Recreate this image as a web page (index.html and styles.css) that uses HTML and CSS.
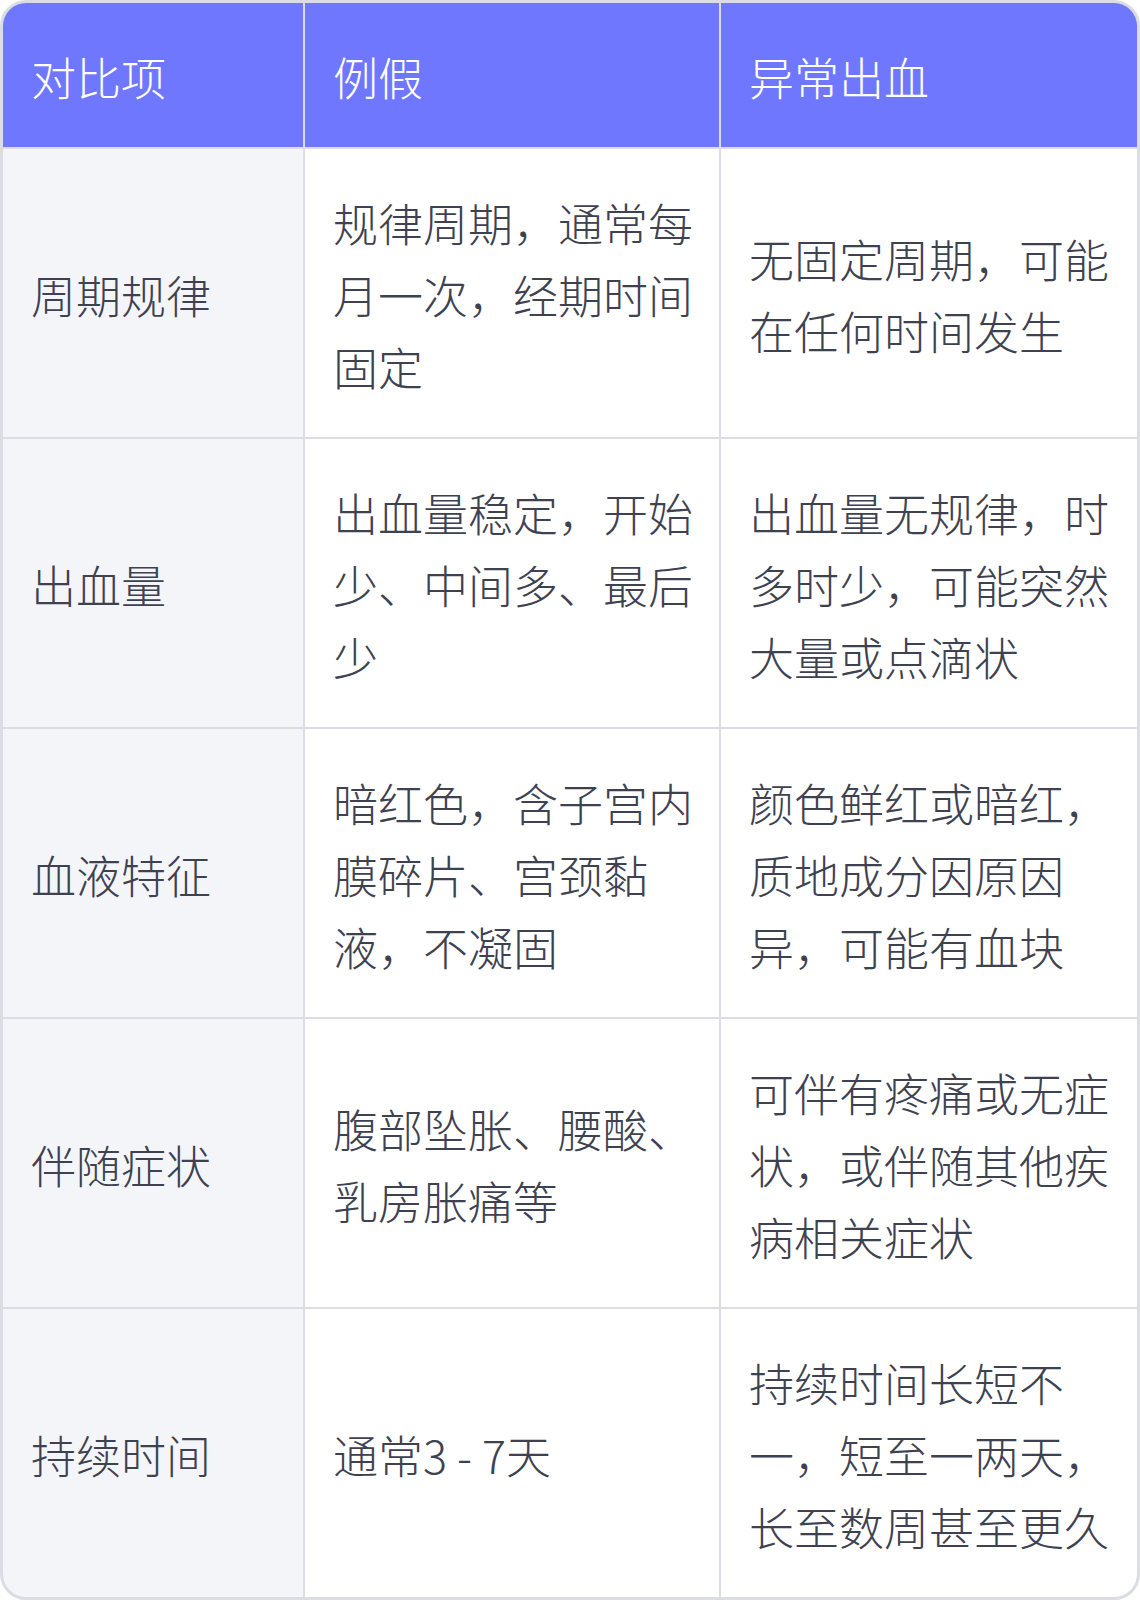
FILE: index.html
```html
<!DOCTYPE html>
<html lang="zh-CN">
<head>
<meta charset="utf-8">
<title>例假与异常出血对比</title>
<link rel="stylesheet" href="styles.css">
</head>
<body>
<div class="table">
  <div class="cell head">对比项</div>
  <div class="cell head">例假</div>
  <div class="cell head last">异常出血</div>

  <div class="cell key">周期规律</div>
  <div class="cell">规律周期，通常每月一次，经期时间固定</div>
  <div class="cell last">无固定周期，可能在任何时间发生</div>

  <div class="cell key">出血量</div>
  <div class="cell">出血量稳定，开始少、中间多、最后少</div>
  <div class="cell last">出血量无规律，时多时少，可能突然大量或点滴状</div>

  <div class="cell key">血液特征</div>
  <div class="cell">暗红色，含子宫内膜碎片、宫颈黏液，不凝固</div>
  <div class="cell last">颜色鲜红或暗红，质地成分因原因异，可能有血块</div>

  <div class="cell key">伴随症状</div>
  <div class="cell">腹部坠胀、腰酸、乳房胀痛等</div>
  <div class="cell last">可伴有疼痛或无症状，或伴随其他疾病相关症状</div>

  <div class="cell key bottom">持续时间</div>
  <div class="cell bottom">通常3 - 7天</div>
  <div class="cell last bottom">持续时间长短不一，短至一两天，长至数周甚至更久</div>
</div>
</body>
</html>
```

FILE: styles.css
```css
* { box-sizing: border-box; }
html, body { margin: 0; padding: 0; background: #ffffff; }
body {
  font-family: "Noto Sans CJK SC", "Noto Sans", sans-serif;
  font-weight: 200;
  color: #3d4150;
}
.table {
  width: 1140px;
  display: grid;
  grid-template-columns: 300px 414px 416px;
  column-gap: 2px;
  row-gap: 2px;
  background: #dcdde3;
  border: 3px solid #dcdde3;
  border-radius: 26px;
  overflow: hidden;
}
.cell {
  background: #ffffff;
  font-size: 45px;
  line-height: 72px;
  padding: 38px 24px 34px 28px;
  min-height: 288px;
  display: flex;
  align-items: center;
}
.cell.head {
  background: #7077ff;
  color: #ffffff;
  min-height: 144px;
}
.cell.key {
  background: #f4f5f9;
}
```
